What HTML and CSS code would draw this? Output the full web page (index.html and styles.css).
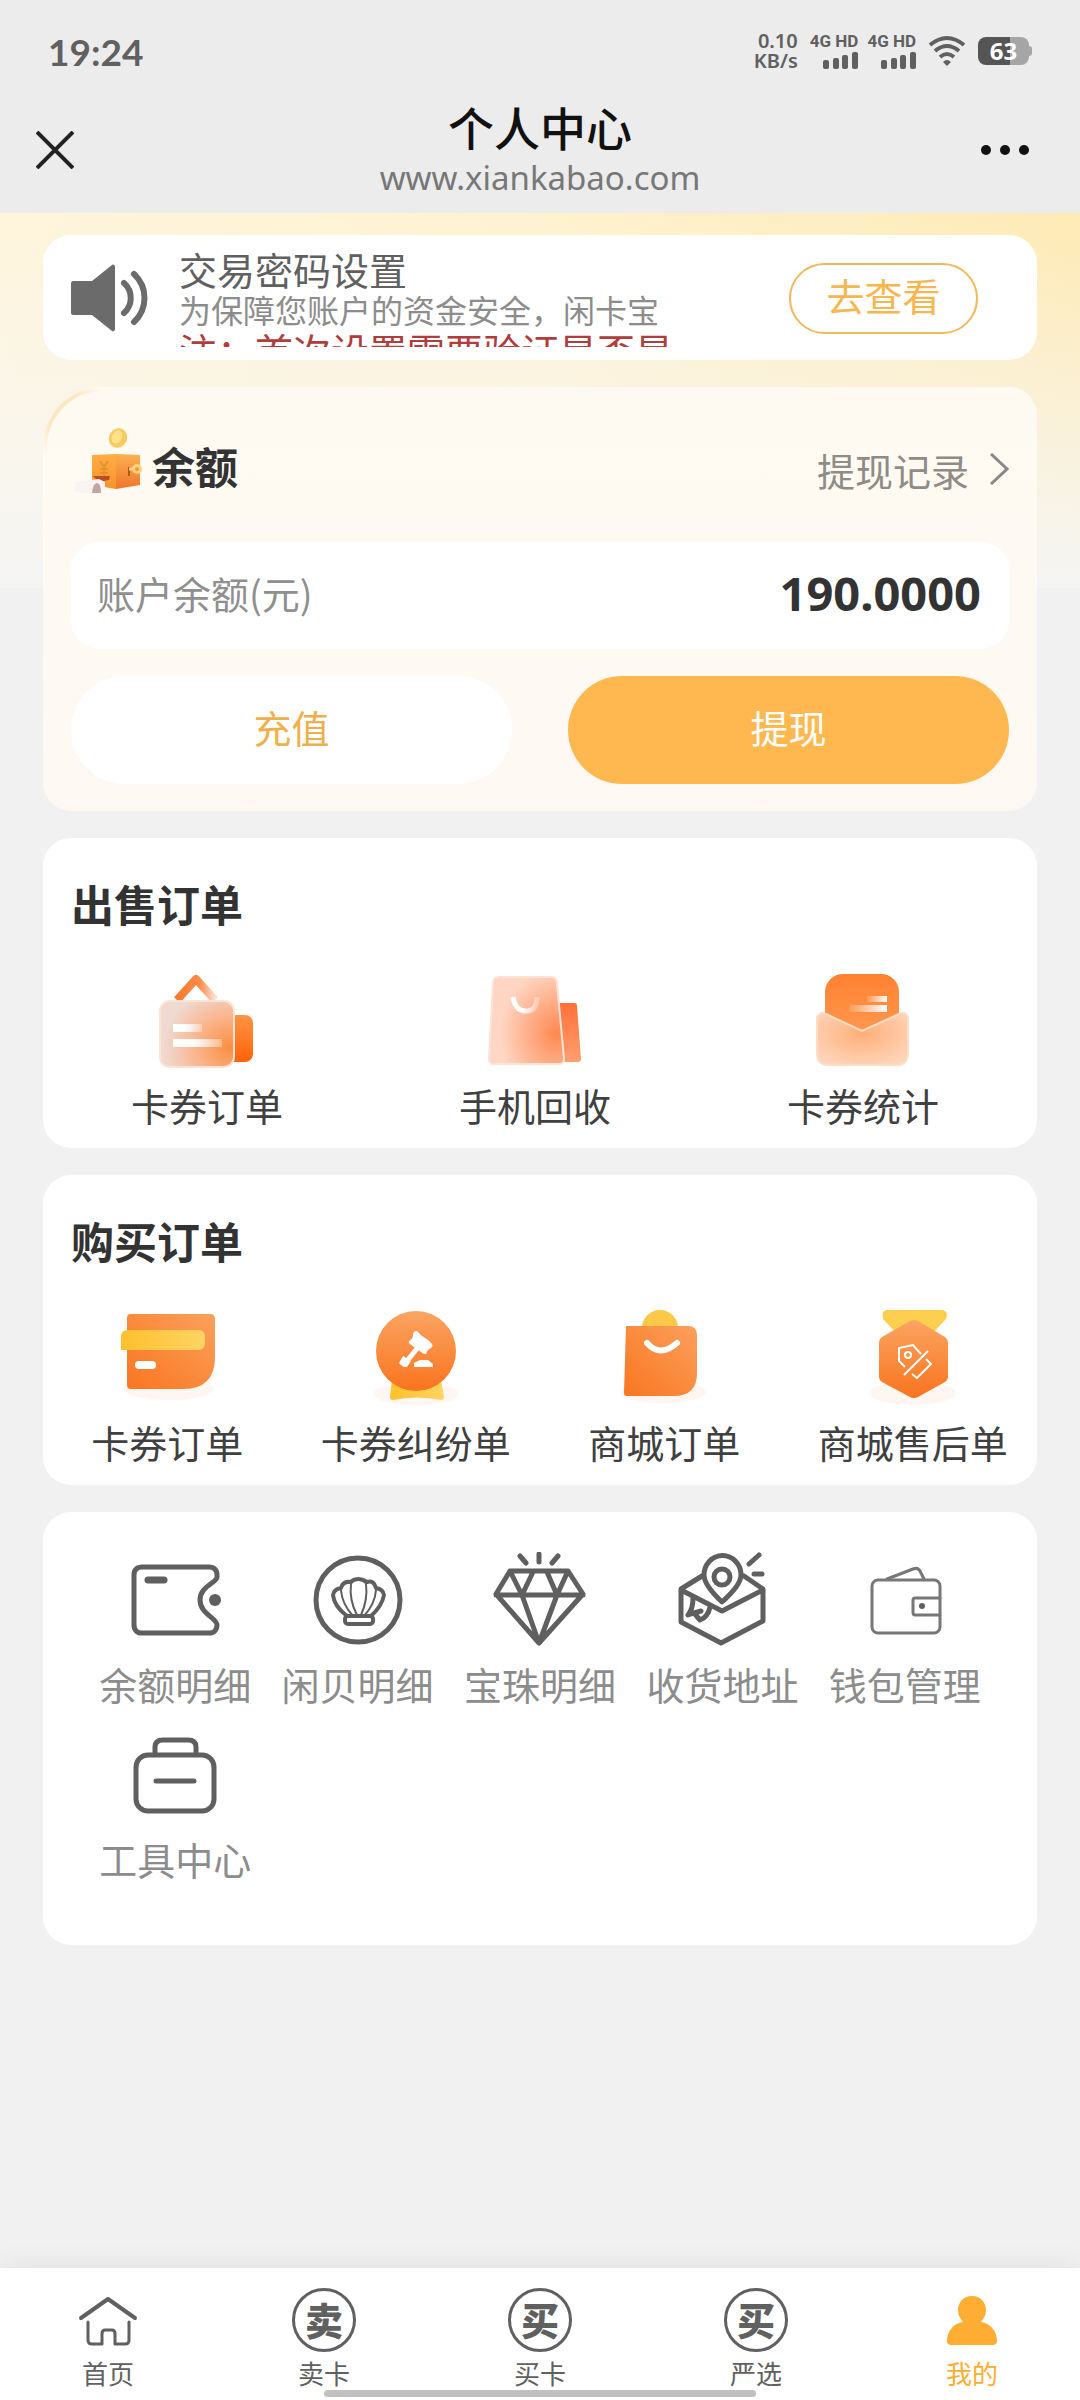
FILE: index.html
```html
<!DOCTYPE html>
<html lang="zh-CN">
<head>
<meta charset="utf-8">
<meta name="viewport" content="width=device-width, initial-scale=1">
<title>个人中心</title>
<link rel="stylesheet" href="styles.css">
</head>
<body>
<div class="app">
  <header class="top">
    <div class="status">
      <span class="status-time">19:24</span>
      <div class="status-right">
        <span class="speed"><span>0.10</span><span>KB/s</span></span>
        <span class="signal"><span>4G HD</span>
          <svg width="36" height="17" viewBox="0 0 36 17" fill="#606060"><rect x="1" y="8" width="6" height="9" rx="2"/><rect x="11" y="6" width="6" height="11" rx="2"/><rect x="20" y="3" width="6" height="14" rx="2"/><rect x="30" y="0" width="6" height="17" rx="2"/></svg></span>
        <span class="signal"><span>4G HD</span>
          <svg width="36" height="17" viewBox="0 0 36 17" fill="#606060"><rect x="1" y="8" width="6" height="9" rx="2"/><rect x="11" y="6" width="6" height="11" rx="2"/><rect x="20" y="3" width="6" height="14" rx="2"/><rect x="30" y="0" width="6" height="17" rx="2"/></svg></span>
        <svg class="wifi" width="38" height="32" viewBox="0 0 38 32" fill="none" stroke="#606060" stroke-width="4"><path d="M2 10Q19-4 36 10"/><path d="M7 16Q19 6 31 16"/><path d="M12 22Q19 16 26 22"/><path d="M15 27Q19 23 23 27L19 31Z" fill="#606060" stroke="none"/></svg>
        <span class="battery"><span class="battery-body">63</span></span>
      </div>
    </div>
    <div class="nav">
      <button class="nav-btn" aria-label="关闭"><svg width="38" height="38" viewBox="0 0 38 38" stroke="#222" stroke-width="4"><path d="M1 1L37 37M37 1L1 37"/></svg></button>
      <div class="nav-title"><h1>个人中心</h1><p>www.xiankabao.com</p></div>
      <button class="nav-btn nav-more" aria-label="更多"><svg width="48" height="38" viewBox="0 0 48 38" fill="#111"><circle cx="5" cy="19" r="5"/><circle cx="24" cy="19" r="5"/><circle cx="43" cy="19" r="5"/></svg></button>
    </div>
  </header>

  <main class="main">
    <section class="notice">
      <svg class="notice-icon" width="78" height="68" viewBox="0 0 78 68"><path d="M2 17h19L41 1c1-1 3 0 3 2v62c0 2-2 3-3 2L21 51H2c-1 0-2-1-2-2V19c0-1 1-2 2-2z" fill="#6b6b6b"/><path d="M53 19c9 8 9 22 0 30M63 10c14 13 14 35 0 48" fill="none" stroke="#6b6b6b" stroke-width="6" stroke-linecap="round"/></svg>
      <div class="notice-text">
        <h2>交易密码设置</h2>
        <p>为保障您账户的资金安全，闲卡宝</p>
        <p class="warn">注：首次设置需要验证是否是</p>
      </div>
      <button class="outline-btn">去查看</button>
    </section>

    <section class="balance">
      <div class="balance-head">
        <svg class="balance-icon" width="72" height="72" viewBox="0 0 72 72">
          <defs>
            <linearGradient id="boxL" x1="0" y1="0" x2="0" y2="1"><stop offset="0" stop-color="#ffae45"/><stop offset="1" stop-color="#f7932c"/></linearGradient>
            <linearGradient id="boxR" x1="0" y1="0" x2="0" y2="1"><stop offset="0" stop-color="#fbb050"/><stop offset="1" stop-color="#f0752a"/></linearGradient>
          </defs>
          <ellipse cx="47" cy="15" rx="9" ry="10" fill="#f9c95e" transform="rotate(25 47 15)"/><ellipse cx="46" cy="14" rx="5" ry="7" fill="#ffe08a" transform="rotate(25 46 14)"/>
          <path d="M21 32l24-1v35l-24-4z" fill="url(#boxL)"/><path d="M45 31l24 1v30l-24 4z" fill="url(#boxR)"/>
          <path d="M29 38l4 6 4-6M33 44v11M29 46h8M29 50h8" fill="none" stroke="#e5922f" stroke-width="2"/>
          <path d="M58 44v9" stroke="#b65316" stroke-width="2"/><path d="M58 46h7" stroke="#ffd080" stroke-width="3"/><circle cx="66" cy="46" r="5" fill="#ffd080"/><circle cx="66" cy="46" r="2" fill="#f09a3c"/>
          <path d="M22 53l17 0-1 4-10 2z" fill="#bd4b24"/><path d="M4 59l24-3 6 3v9l-8 3-22-2z" fill="#f9f4f2"/><path d="M21 70q1-10 5-10t4 10z" fill="#c0a7a4"/>
        </svg>
        <h2 class="title">余额</h2>
        <a class="record" href="#">提现记录<svg width="20" height="32" viewBox="0 0 20 32" fill="none" stroke="#888" stroke-width="3"><path d="M2 1L18 16L2 31"/></svg></a>
      </div>
      <div class="amount"><span>账户余额(元)</span><strong>190.0000</strong></div>
      <div class="actions">
        <button class="pill">充值</button>
        <button class="pill pill-primary">提现</button>
      </div>
    </section>

    <section class="card">
      <h2 class="title">出售订单</h2>
      <nav class="grid grid-3">
        <a class="item" href="#">
          <svg class="icon" viewBox="0 0 96 96">
            <defs>
              <linearGradient id="s1a" x1="0" y1="0" x2="1" y2="0"><stop offset="0" stop-color="#f97a2e"/><stop offset=".6" stop-color="#f98b4a"/><stop offset="1" stop-color="#fde0d0"/></linearGradient>
              <linearGradient id="s1b" x1="0" y1="0" x2="0" y2="1"><stop offset="0" stop-color="#ff9445"/><stop offset="1" stop-color="#ff6208"/></linearGradient>
              <radialGradient id="s1c" cx=".95" cy=".7" r=".9"><stop offset="0" stop-color="#fc8d40"/><stop offset=".5" stop-color="#fab38a"/><stop offset="1" stop-color="#efd9d0"/></radialGradient>
              <linearGradient id="fadeR" x1="0" y1="0" x2="1" y2="0"><stop offset=".4" stop-color="#fff"/><stop offset="1" stop-color="#fff" stop-opacity=".3"/></linearGradient>
            </defs>
            <path d="M18 27L37 6L56 27" fill="none" stroke="url(#s1a)" stroke-width="8" stroke-linejoin="round"/>
            <rect x="64" y="42" width="30" height="47" rx="8" fill="url(#s1b)"/>
            <rect x="1" y="28" width="74" height="66" rx="10" fill="url(#s1c)" stroke="#fde3d2" stroke-width="2"/>
            <rect x="14" y="51" width="29" height="8" fill="url(#fadeR)"/><rect x="14" y="66" width="49" height="8" fill="url(#fadeR)"/>
          </svg><span>卡券订单</span></a>
        <a class="item" href="#">
          <svg class="icon" viewBox="0 0 96 96">
            <defs>
              <linearGradient id="s2a" x1="0" y1="0" x2="0" y2="1"><stop offset="0" stop-color="#ff6f38"/><stop offset="1" stop-color="#ffa070"/></linearGradient>
              <radialGradient id="s2b" cx=".9" cy=".65" r=".75"><stop offset="0" stop-color="#ff8850"/><stop offset="1" stop-color="#fed6c3"/></radialGradient>
            </defs>
            <path d="M72 30h15q3 0 3 3l4 53q0 3-3 3H72z" fill="url(#s2a)"/>
            <path d="M12 4h52q6 0 6 6l7 76q0 5-5 5H7q-5 0-5-5L6 10q0-6 6-6z" fill="url(#s2b)" stroke="#fee2d5" stroke-width="2"/>
            <path d="M26 24q2 14 13 14T50 24" fill="none" stroke="url(#fadeR)" stroke-width="5"/>
          </svg><span>手机回收</span></a>
        <a class="item" href="#">
          <svg class="icon" viewBox="0 0 96 96">
            <defs>
              <linearGradient id="s3a" x1="0" y1="0" x2="0" y2="1"><stop offset="0" stop-color="#ff8130"/><stop offset="1" stop-color="#ffa05c"/></linearGradient>
              <radialGradient id="s3b" cx=".5" cy=".4" r=".65"><stop offset="0" stop-color="#ffae78"/><stop offset="1" stop-color="#fed5ba"/></radialGradient>
              <linearGradient id="fadeL" x1="0" y1="0" x2="1" y2="0"><stop offset="0" stop-color="#fff" stop-opacity=".1"/><stop offset="1" stop-color="#fff"/></linearGradient>
            </defs>
            <rect x="10" y="1" width="74" height="80" rx="18" fill="url(#s3a)"/>
            <rect x="52" y="23" width="20" height="6" fill="url(#fadeL)"/><rect x="34" y="32" width="38" height="7" fill="url(#fadeL)"/>
            <path d="M6 40q2-1 5 1l36 17 37-17q3-2 6-1l3 4v36q0 12-12 12H14Q2 92 2 80V44z" fill="url(#s3b)" stroke="#feddc5" stroke-width="2"/>
          </svg><span>卡券统计</span></a>
      </nav>
    </section>

    <section class="card">
      <h2 class="title">购买订单</h2>
      <nav class="grid grid-4">
        <a class="item" href="#">
          <svg class="icon" viewBox="0 0 96 96">
            <defs>
              <linearGradient id="org" x1="0" y1="1" x2="1" y2="0"><stop offset="0" stop-color="#f97620"/><stop offset="1" stop-color="#fca05c"/></linearGradient>
              <linearGradient id="orgV" x1="0" y1="0" x2="0" y2="1"><stop offset="0" stop-color="#fca461"/><stop offset="1" stop-color="#f9741e"/></linearGradient>
              <linearGradient id="yel" x1="0" y1="0" x2="1" y2="0"><stop offset="0" stop-color="#fec02c"/><stop offset="1" stop-color="#fed463"/></linearGradient>
            </defs>
            <ellipse cx="50" cy="79" rx="45" ry="11" fill="#fff6f2"/>
            <path d="M12 4h79q5 0 5 5v38q0 32-32 32H12q-4 0-4-4V8q0-4 4-4z" fill="url(#org)"/>
            <path d="M9 20h70q7 0 7 7v6q0 7-7 7H2V27q0-7 7-7z" fill="url(#yel)"/>
            <rect x="16" y="51" width="21" height="8" rx="4" fill="#fff"/>
          </svg><span>卡券订单</span></a>
        <a class="item" href="#">
          <svg class="icon" viewBox="0 0 96 96">
            <ellipse cx="48" cy="84" rx="43" ry="11" fill="#fff6f2"/>
            <path d="M24 70h49l3 17q0 3-3 3-24-5-48 0-3 0-3-3z" fill="url(#yel)"/>
            <circle cx="48" cy="41" r="40" fill="url(#orgV)"/>
            <path d="M49 21q3 4 8 7t7 6-3 5q-2 2-3 5-3 0-5-2l-11-8q-2-1-1-3 4-2 4-6t4-4z" fill="#fff"/><path d="M51 36L39 51" stroke="#fff" stroke-width="5"/><path d="M35 46l8 5-4 6q-4 1-8-4z" fill="#fff"/><path d="M46 57v-4l6-3h8l5 4v3z" fill="#fff"/>
          </svg><span>卡券纠纷单</span></a>
        <a class="item" href="#">
          <svg class="icon" viewBox="0 0 96 96">
            <ellipse cx="47" cy="82" rx="43" ry="11" fill="#fff6f2"/>
            <circle cx="44" cy="18" r="18" fill="#fdc848"/>
            <path d="M10 16h62q9 0 9 9v38q0 23-23 23H11q-3 0-3-3z" fill="url(#org)"/>
            <path d="M31 33q13 15 30 0" fill="none" stroke="#fff" stroke-width="6" stroke-linecap="round"/>
          </svg><span>商城订单</span></a>
        <a class="item" href="#">
          <svg class="icon" viewBox="0 0 96 96">
            <ellipse cx="48" cy="83" rx="43" ry="12" fill="#fff6f2"/>
            <path d="M21 0h57q6 2 3 9L66 25H33L18 9q-2-7 3-9z" fill="#fdcf50"/>
            <path d="M45 11q4-2 8 0l27 16q3 2 3 5v35q0 3-3 5L53 87q-4 2-8 0L17 72q-3-2-3-5V32q0-3 3-5z" fill="url(#orgV)"/>
            <path d="M40 57l-6-6V38l14-3 8 9M63 41L39 65M61 49l5 5-14 14-5-4" fill="none" stroke="#fff" stroke-width="2"/><circle cx="43" cy="45" r="3" fill="none" stroke="#fff" stroke-width="2"/>
          </svg><span>商城售后单</span></a>
      </nav>
    </section>

    <section class="card card-tools">
      <nav class="grid grid-5">
        <a class="item" href="#">
          <svg class="icon line" viewBox="0 0 96 96"><path d="M15 15H82c5 0 8 3 8 8v2c0 6-17 9-17 23s17 18 17 25c0 5-3 8-8 8H15c-5 0-8-3-8-8V23c0-5 3-8 8-8z"/><path d="M21 28H37" stroke-width="7"/><circle cx="88" cy="48" r="6" class="dot"/></svg><span>余额明细</span></a>
        <a class="item" href="#">
          <svg class="icon line" viewBox="0 0 96 96"><circle cx="48" cy="48" r="42"/><g stroke-width="4"><path d="M37 64Q24 54 23 43Q24 37 31 36Q33 29 40 30Q48 24 57 30Q64 28 66 36Q73 37 74 43Q72 54 61 64"/><rect x="35" y="64" width="28" height="8" rx="3"/></g><path stroke-width="2" d="M43 64Q32 52 31 38M47 63Q39 48 41 32Q44 27 48 28Q54 27 56 32Q58 48 51 63M54 64Q65 52 66 38"/></svg><span>闲贝明细</span></a>
        <a class="item" href="#">
          <svg class="icon line" viewBox="0 0 96 96"><path d="M18 19H76L91 42L47 91L4 42ZM4 43H91M18 19L30 43L41 20M55 20L65 43L76 19M30 43L47 91L65 43M28 4L34 11M47 2V10M66 4L60 11"/></svg><span>宝珠明细</span></a>
        <a class="item" href="#">
          <svg class="icon line" viewBox="0 0 96 96"><path d="M28 24L7 37V70L47 91L89 69V37L70 24M7 38L48 59L89 38M75 12L85 3M80 22H88M19 46Q19 57 14 63L20 61L26 68Q34 65 36 55M20 61L27 59"/><path d="M48 50Q30 33 30 23A18 19 0 0 1 67 23Q67 33 48 50Z" fill="#fff"/><circle cx="48" cy="25" r="8"/></svg><span>收货地址</span></a>
        <a class="item" href="#">
          <svg class="icon line thin" viewBox="0 0 96 96"><rect x="15" y="28" width="68" height="53" rx="6"/><path d="M30 27L56 17Q61 15 63 19L67 27M83 46H58Q56 46 56 48V60Q56 63 58 63H83"/><circle cx="65" cy="54" r="3" class="dot"/></svg><span>钱包管理</span></a>
        <a class="item" href="#">
          <svg class="icon line" viewBox="0 0 96 96"><rect x="9" y="28" width="78" height="56" rx="12"/><path d="M28 27V20Q28 13 36 13H61Q69 13 69 20V27M29 54H67"/></svg><span>工具中心</span></a>
      </nav>
    </section>
  </main>

  <footer class="tabbar">
    <nav class="tabs">
      <a class="tab" href="#"><svg width="64" height="64" viewBox="0 0 64 64" fill="none" stroke="#606060" stroke-width="4" stroke-linecap="round" stroke-linejoin="round"><path d="M5 30L32 11L59 30"/><path stroke-width="3" d="M12 34V52Q12 56 16 56H26V46Q26 42 29 42H36Q39 42 39 46V56H49Q53 56 53 52V34"/></svg><span>首页</span></a>
      <a class="tab" href="#"><b class="ring">卖</b><span>卖卡</span></a>
      <a class="tab" href="#"><b class="ring">买</b><span>买卡</span></a>
      <a class="tab" href="#"><b class="ring">买</b><span>严选</span></a>
      <a class="tab active" href="#" aria-current="page"><svg width="64" height="64" viewBox="0 0 64 64" fill="#ffad33"><path d="M32 8c8 0 14 6 14 14 0 5-2 8-5 12 9 1 16 9 16 19 0 3-2 4-5 4H12c-3 0-5-1-5-4 0-10 7-18 16-19-3-4-5-7-5-12 0-8 6-14 14-14z"/></svg><span>我的</span></a>
    </nav>
    <div class="home-bar"></div>
  </footer>
</div>
</body>
</html>
```
FILE: styles.css
```css
* { box-sizing: border-box; margin: 0; padding: 0; }

body {
  font-family: "Noto Sans CJK SC", "Noto Sans", sans-serif;
  font-size: 38px;
  color: #333;
  background: #f1f1f1;
}

a { color: inherit; text-decoration: none; }
button { font: inherit; color: inherit; border: 0; background: none; cursor: pointer; }
h1, h2, p { font-weight: 400; }
svg { display: block; flex: none; }

.app { display: flex; flex-direction: column; min-height: 100vh; }

/* Status bar and title bar */
.top { background: #ececec; }
.status {
  display: flex;
  align-items: center;
  justify-content: space-between;
  height: 102px;
  padding: 0 48px;
  color: #606060;
}
.status-time { font-family: Lato, sans-serif; font-size: 37px; font-weight: 700; }
.status-right { display: flex; align-items: center; gap: 12px; }
.speed {
  display: flex;
  flex-direction: column;
  align-items: flex-end;
  font-family: "Noto Sans", sans-serif;
  font-size: 20px;
  line-height: 20px;
  font-weight: 600;
}
.signal {
  display: flex;
  flex-direction: column;
  align-items: flex-end;
  gap: 3px;
  font-family: Roboto, sans-serif;
  font-size: 17px;
  line-height: 15px;
  font-weight: 700;
}
.signal + .signal { margin-left: -3px; }
.battery { display: flex; align-items: center; }
.battery-body {
  width: 51px;
  height: 28px;
  border-radius: 8px;
  background: linear-gradient(90deg, #555 63%, #a6a6a6 63%);
  color: #fff;
  font-family: "Noto Sans", sans-serif;
  font-size: 24px;
  line-height: 28px;
  font-weight: 700;
  text-align: center;
}
.battery::after { content: ""; width: 3px; height: 10px; border-radius: 0 3px 3px 0; background: #a6a6a6; }

.nav { display: flex; align-items: center; justify-content: space-between; height: 111px; padding: 0 36px; }
.nav-btn { display: flex; width: 80px; padding-bottom: 16px; }
.nav-more { justify-content: flex-end; padding-right: 15px; }
.nav-title { padding-bottom: 12px; text-align: center; }
.nav-title h1 { font-size: 46px; line-height: 52px; font-weight: 500; color: #111; }
.nav-title p { font-family: "Noto Sans", sans-serif; font-size: 33px; line-height: 52px; color: #777; }

/* Page content */
.main {
  flex: 1;
  display: flex;
  flex-direction: column;
  gap: 27px;
  padding: 22px 43px 28px;
  background:
    linear-gradient(180deg, rgba(245, 245, 245, 0) 0, rgba(246, 246, 246, .6) 60%, #f5f5f5 100%) 0 0 / 100% 375px no-repeat,
    linear-gradient(90deg, #fff5dc, #fff2cf 50%, #feeab4) 0 0 / 100% 375px no-repeat,
    #f1f1f1;
}

.notice {
  display: flex;
  align-items: center;
  padding: 14px 59px 13px 28px;
  border-radius: 28px;
  background: #fff;
}
.notice-text { flex: 1; height: 98px; margin-left: 30px; overflow: hidden; white-space: nowrap; }
.notice-text h2 { font-size: 38px; line-height: 40px; color: #606060; }
.notice-text p { font-size: 32px; line-height: 40px; color: #8c8c8c; }
.notice-text .warn { font-size: 38px; line-height: 42px; color: #b03c3c; }
.outline-btn {
  width: 189px;
  height: 71px;
  padding-bottom: 6px;
  border: 2px solid #f0b95a;
  border-radius: 36px;
  color: #f7b64e;
  line-height: 60px;
}

.balance {
  position: relative;
  padding: 36px 28px 27px;
  border-radius: 60px 28px 28px 28px;
  background: linear-gradient(180deg, #fffaf1, #fefaf3 50%, #fff8f2);
}
.balance::before {
  content: "";
  position: absolute;
  left: 0;
  top: 0;
  width: 60px;
  height: 68px;
  border: solid #fde6c2;
  border-width: 4px 0 0 4px;
  border-radius: 60px 0 0 0;
  mask-image: linear-gradient(45deg, transparent 5%, #000 30%, #000 70%, transparent 95%);
}
.balance-head { display: flex; align-items: center; height: 84px; margin-bottom: 35px; }
.balance-icon { align-self: flex-start; }
.balance-head .title { margin-left: 9px; }
.title { font-size: 43px; line-height: 52px; font-weight: 700; color: #333; }
.record { display: flex; align-items: center; gap: 20px; margin-left: auto; padding-top: 8px; color: #8f8b86; }
.amount {
  display: flex;
  align-items: center;
  justify-content: space-between;
  height: 107px;
  padding: 0 28px 6px 26px;
  border-radius: 28px;
  background: #fff;
  color: #8f8f8f;
}
.amount strong { font-family: "Noto Sans", sans-serif; font-size: 47px; line-height: 60px; font-weight: 700; color: #333; }
.actions { display: flex; gap: 56px; margin-top: 27px; }
.pill { flex: 1; height: 108px; padding-bottom: 8px; border-radius: 54px; background: #fff; color: #efaf4a; }
.pill-primary { background: #ffb850; color: #fff; }

.card { padding: 39px 0 21px; border-radius: 28px; background: #fff; }
.card .title { padding: 0 28px; margin-bottom: 44px; }
.grid { display: grid; row-gap: 19px; }
.grid-3 { grid-template-columns: repeat(3, 33%); }
.grid-4 { grid-template-columns: repeat(4, 1fr); }
.grid-5 { grid-template-columns: repeat(5, 1fr); }
.item { display: flex; flex-direction: column; align-items: center; gap: 14px; line-height: 44px; color: #404040; white-space: nowrap; }
.icon { width: 96px; height: 96px; }
.card-tools { padding: 40px 41px 64px; }
.card-tools .item { color: #8c8c8c; }
.card-tools .grid { row-gap: 21px; }
.line { fill: none; stroke: #5f5f5f; stroke-width: 5; stroke-linecap: round; stroke-linejoin: round; }
.line .dot { fill: #5f5f5f; stroke: none; }
.thin { stroke: #777; stroke-width: 3; }

/* Bottom tab bar */
.tabbar { position: sticky; bottom: 0; height: 132px; background: #fff; box-shadow: 0 0 28px rgba(0, 0, 0, .08); }
.tabs { display: grid; grid-template-columns: repeat(5, 1fr); padding-top: 20px; }
.tab { display: flex; flex-direction: column; align-items: center; gap: 4px; font-size: 26px; line-height: 34px; color: #606060; }
.tab.active { color: #ffad33; }
.ring {
  width: 64px;
  height: 64px;
  border: 3px solid #606060;
  border-radius: 50%;
  font-size: 38px;
  line-height: 56px;
  font-weight: 900;
  text-align: center;
}
.home-bar { position: absolute; bottom: 3px; left: 30%; width: 40%; height: 7px; border-radius: 4px; background: #c1c1c1; }
```
